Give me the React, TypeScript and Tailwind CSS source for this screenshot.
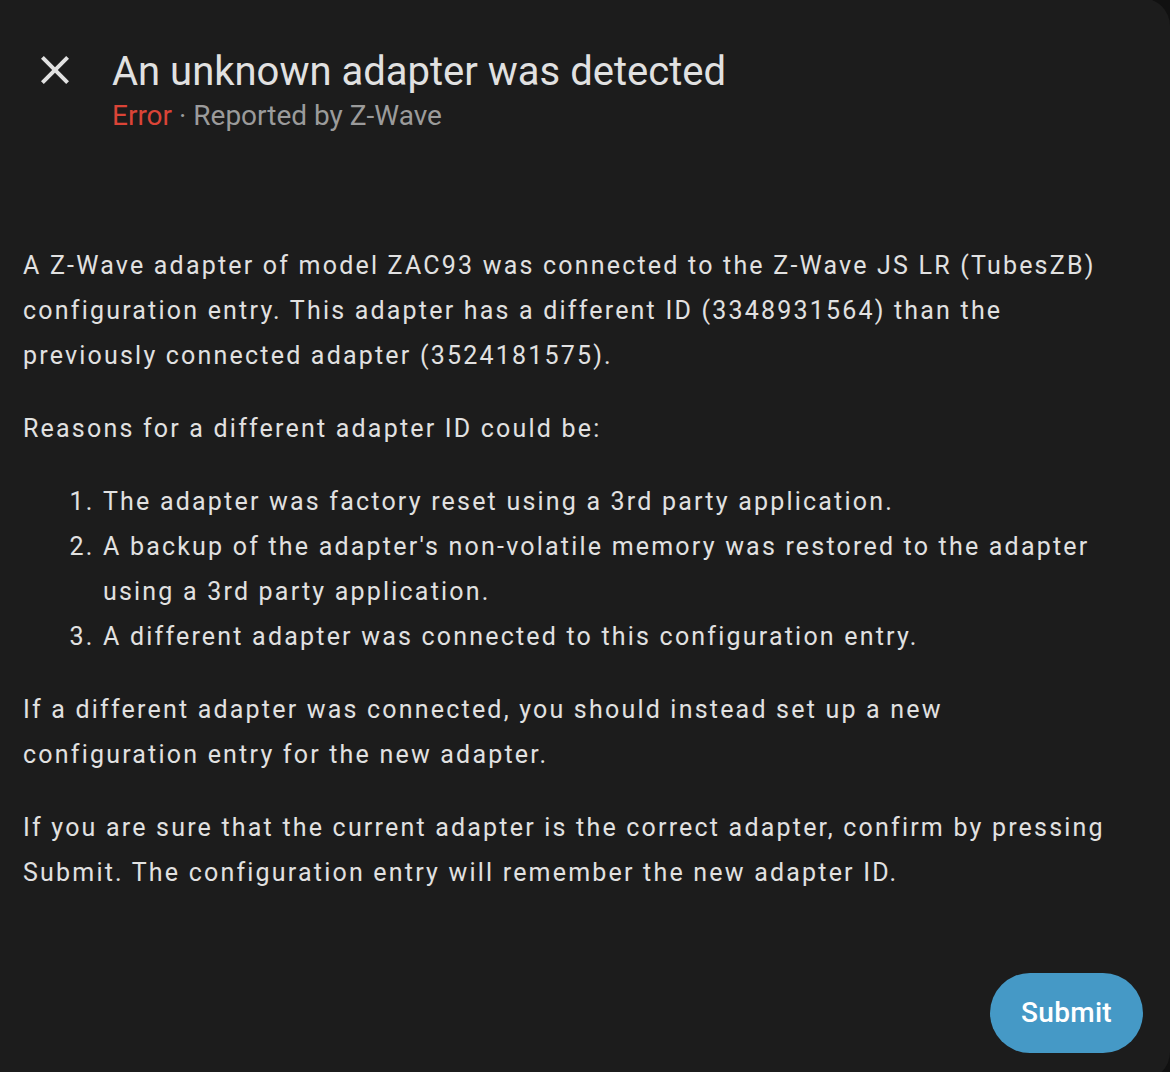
import React from "react";

const body = "text-[25px] leading-[45px] tracking-[2.2px] text-[#e1e1e1]";

export default function App() {
    return (
        <div className="w-[1170px] h-[1072px] overflow-hidden bg-[#111111]" style={{ fontFamily: "Roboto, 'Noto Sans', sans-serif" }}>
            <div className="-mt-[2px] h-[1082px] w-[1170px] bg-[#1c1c1c] rounded-tr-[28px] rounded-br-[28px] flex flex-col">
                {/* header */}
                <div className="flex items-start pt-[50px]">
                    <button type="button" className="ml-[31px] mt-[-2px] w-[48px] h-[48px] flex items-center justify-center text-[#e1e1e1]">
                        <svg width="48" height="48" viewBox="0 0 24 24" fill="currentColor">
                            <path d="M19,6.41L17.59,5L12,10.59L6.41,5L5,6.41L10.59,12L5,17.59L6.41,19L12,13.41L17.59,19L19,17.59L13.41,12L19,6.41Z" />
                        </svg>
                    </button>
                    <div className="ml-[33px] flex flex-col">
                        <h2 className="text-[40px] leading-[48px] text-[#e1e1e1] font-normal">An unknown adapter was detected</h2>
                        <div className="text-[28px] leading-[34px] text-[#9b9b9b] mt-[3px]">
                            <span className="text-[#db4437]">Error</span> · Reported by Z-Wave
                        </div>
                    </div>
                </div>

                {/* content */}
                <div className={`pl-[23px] pr-[50px] pt-[110px] ${body}`}>
                    <p>
                        A Z-Wave adapter of model ZAC93 was connected to the Z-Wave JS LR (TubesZB) configuration entry. This adapter has a different ID (3348931564) than the previously connected adapter (3524181575).
                    </p>
                    <p className="mt-[28px]">Reasons for a different adapter ID could be:</p>
                    <ol className="list-decimal pl-[80px] mt-[28px]">
                        <li>The adapter was factory reset using a 3rd party application.</li>
                        <li>A backup of the adapter's non-volatile memory was restored to the adapter using a 3rd party application.</li>
                        <li>A different adapter was connected to this configuration entry.</li>
                    </ol>
                    <p className="mt-[28px]">
                        If a different adapter was connected, you should instead set up a new configuration entry for the new adapter.
                    </p>
                    <p className="mt-[28px]">
                        If you are sure that the current adapter is the correct adapter, confirm by pressing Submit. The configuration entry will remember the new adapter ID.
                    </p>
                </div>

                {/* actions */}
                <div className="mt-auto flex justify-end pr-[27px] pb-[27px]">
                    <button type="button" className="w-[153px] h-[80px] rounded-full bg-[#4599c6] text-white text-[28px] font-medium tracking-[0.3px]">
                        Submit
                    </button>
                </div>
            </div>
        </div>
    );
}
